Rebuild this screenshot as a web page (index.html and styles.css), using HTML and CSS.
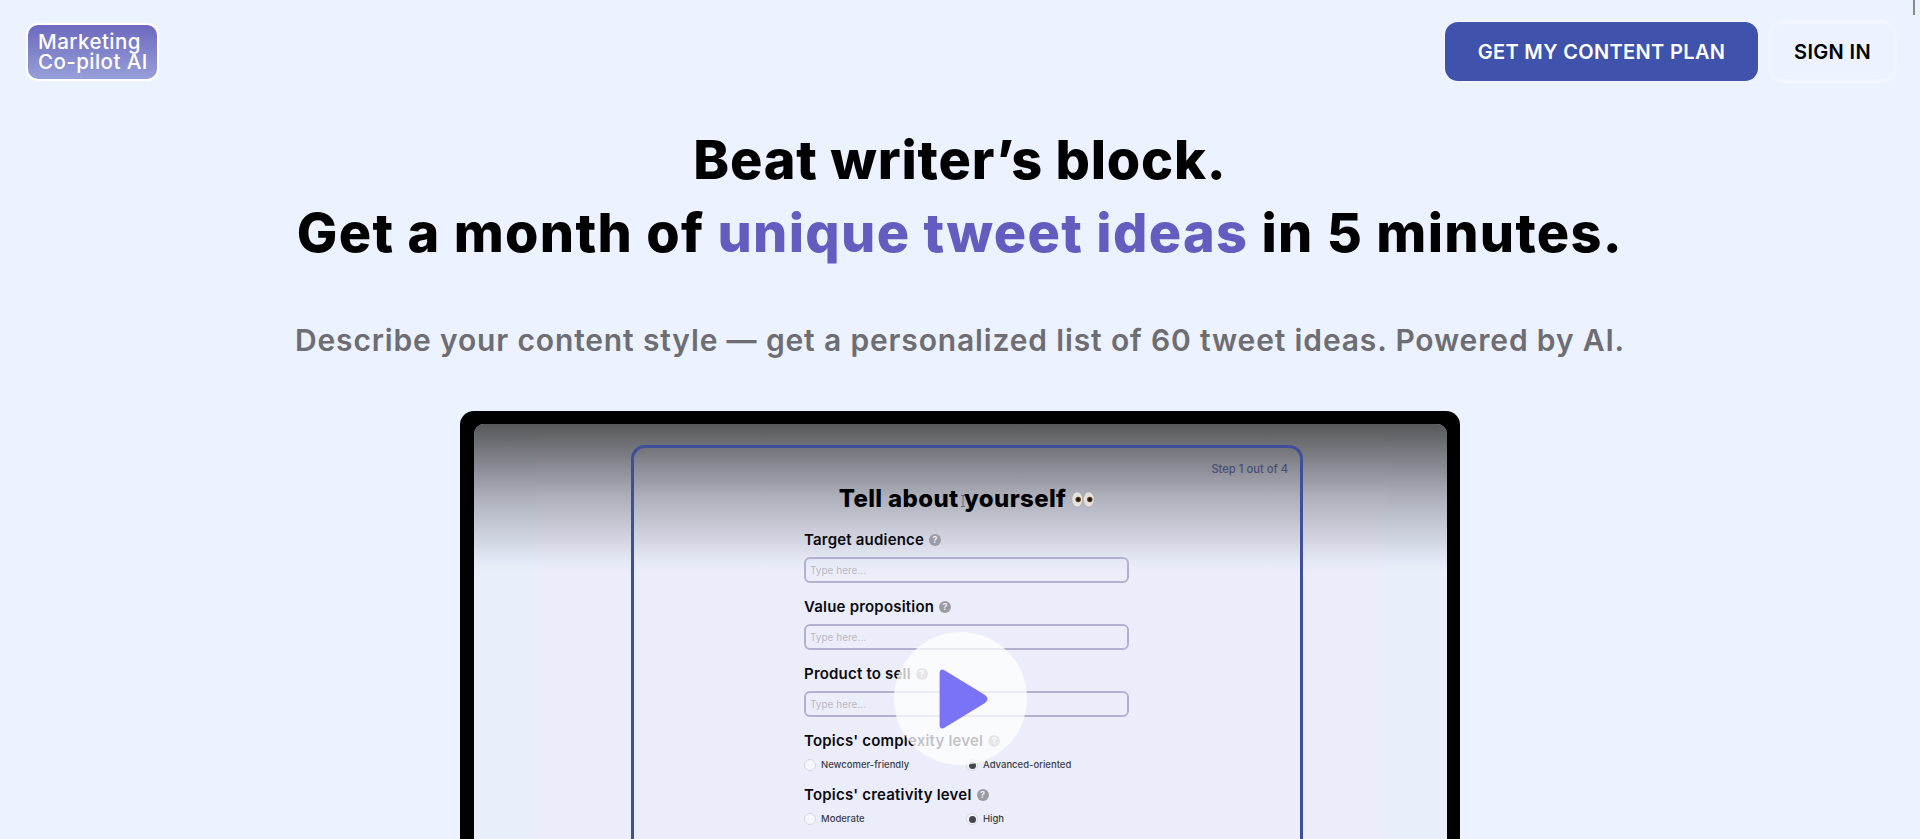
FILE: index.html
```html
<!DOCTYPE html>
<html lang="en">
<head>
<meta charset="utf-8">
<title>Marketing Co-pilot AI</title>
<link rel="stylesheet" href="styles.css">
</head>
<body>
<span class="scroll-mark"></span>
<header class="nav">
  <a class="logo">Marketing<br>Co-pilot AI</a>
  <div class="nav-actions">
    <a class="btn btn-primary">GET MY CONTENT PLAN</a>
    <a class="btn btn-ghost">SIGN IN</a>
  </div>
</header>
<main class="hero">
  <h1 class="title"><span class="title-first">Beat writer’s block.</span><br>Get a month of <span class="accent">unique tweet ideas</span> in 5 minutes.</h1>
  <p class="subtitle">Describe your content style — get a personalized list of 60 tweet ideas. Powered by AI.</p>
  <section class="video">
    <div class="screen">
      <div class="shade"></div>
      <div class="card">
        <div class="step">Step 1 out of 4</div>
        <h2 class="card-title">Tell about yourself
          <svg class="eyes" viewBox="0 0 24 16" aria-hidden="true">
            <ellipse cx="6.2" cy="8" rx="5.4" ry="7.6" fill="#e4e2dc" stroke="#a9a8a6" stroke-width=".6"/>
            <ellipse cx="17.8" cy="8" rx="5.4" ry="7.6" fill="#e4e2dc" stroke="#a9a8a6" stroke-width=".6"/>
            <circle cx="7.2" cy="8" r="2.7" fill="#5b3a12"/><circle cx="7.2" cy="8" r="1.5" fill="#111"/>
            <circle cx="18.8" cy="8" r="2.7" fill="#5b3a12"/><circle cx="18.8" cy="8" r="1.5" fill="#111"/>
          </svg>
        </h2>
        <div class="form">
          <div class="field">
            <div class="label">Target audience <span class="help">?</span></div>
            <div class="input">Type here...</div>
          </div>
          <div class="field">
            <div class="label">Value proposition <span class="help">?</span></div>
            <div class="input">Type here...</div>
          </div>
          <div class="field">
            <div class="label">Product to sell <span class="help">?</span></div>
            <div class="input">Type here...</div>
          </div>
          <div class="field field-radio">
            <div class="label">Topics' complexity level <span class="help">?</span></div>
            <div class="radios">
              <div class="radio"><span class="dot"></span>Newcomer-friendly</div>
              <div class="radio"><span class="dot dot-on"></span>Advanced-oriented</div>
            </div>
          </div>
          <div class="field field-radio">
            <div class="label">Topics' creativity level <span class="help">?</span></div>
            <div class="radios">
              <div class="radio"><span class="dot"></span>Moderate</div>
              <div class="radio"><span class="dot dot-on"></span>High</div>
            </div>
          </div>
        </div>
      </div>
      <svg class="cursor" viewBox="0 0 6 12" aria-hidden="true">
        <path d="M1 .5h4M3 .5v11M1 11.5h4" fill="none" stroke="#56565c" stroke-width=".8"/>
      </svg>
      <div class="play">
        <svg class="play-icon" viewBox="0 0 49 60" aria-hidden="true">
          <path d="M5 1 Q1 -1 .6 4 L.6 56 Q1 61 5 59 L46 34 Q51 30 46 26 Z" fill="#7b73f6"/>
        </svg>
      </div>
    </div>
  </section>
</main>
</body>
</html>
```
FILE: styles.css
```css
* { box-sizing: border-box; }
html, body { margin: 0; height: 839px; overflow: hidden; }
body {
  background: #ecf2ff;
  font-family: Inter, "Open Sans", sans-serif;
  color: #000;
  position: relative;
}
.scroll-mark {
  position: absolute; top: 0; right: 5px;
  width: 2px; height: 15px; background: #8a8a8f;
}
.nav {
  display: flex; justify-content: space-between; align-items: center;
  padding: 22px 25px 0 26px;
}
.logo {
  display: block; width: 133px; height: 58px;
  padding: 7px 0 0 10px;
  border: 2px solid #fff; border-radius: 12px;
  background: linear-gradient(#6d69bf, #979fd8);
  color: #fff; font-size: 20.5px; font-weight: 500; line-height: 20px;
  letter-spacing: .45px;
}
.nav-actions { display: flex; gap: 12px; }
.btn {
  display: flex; align-items: center; justify-content: center;
  height: 59px; border-radius: 13px;
  font-size: 20px; font-weight: 600; letter-spacing: .35px;
}
.btn-primary { width: 313px; background: #3f52ac; color: #fff; box-shadow: 0 0 3px #fff; }
.btn-ghost { width: 125px; box-shadow: 0 0 4px #fff; border: 2px solid #f1f5ff; }
.hero { display: flex; flex-direction: column; align-items: center; }
.title {
  margin: 42px 0 0; text-align: center;
  font-size: 54px; line-height: 73px; font-weight: 800; letter-spacing: 1.3px;
}
.title-first { letter-spacing: .8px; }
.accent { color: #655cbf; }
.subtitle {
  margin: 51px 0 0; color: #6d6d72;
  font-size: 30px; line-height: 40px; font-weight: 600; letter-spacing: .85px;
}
.video {
  width: 1000px; height: 600px; margin-top: 51px; flex: none;
  background: #000; border-radius: 14px;
  padding: 13px 13px 0 14px;
}
.screen {
  position: relative; height: 100%; overflow: hidden;
  border-radius: 10px 10px 0 0;
  background: linear-gradient(90deg, #e8eefa 0, #e8eefa 60px, #ebeefa 64px, #ebeefa 910px, #e8eefa 914px);
  padding: 21px 0 0 157px;
}
.card {
  width: 672px; height: 600px; position: relative;
  border: 3px solid #414e9a; border-radius: 14px;
  text-align: center;
  padding-top: 34px;
}
.step {
  position: absolute; top: 13px; right: 12px;
  font-size: 11.2px; line-height: 16px; font-weight: 500; color: #4b4e78;
}
.card-title {
  margin: 0; font-size: 24px; line-height: 34px; font-weight: 800; letter-spacing: .35px;
  display: flex; justify-content: center; align-items: center; gap: 5px;
}
.eyes { width: 24px; height: 17px; }
.form { width: 325px; margin: 14px 0 0 170px; text-align: left; }
.field { height: 67px; }
.field-radio { height: 54px; }
.label {
  font-size: 15px; line-height: 20px; font-weight: 600; color: #0a0a10; letter-spacing: .2px;
  display: flex; align-items: center; gap: 5px;
}
.help {
  width: 12px; height: 12px; border-radius: 50%;
  background: #9b9ca3; color: #ebeefa;
  font-size: 9px; line-height: 12px; font-weight: 700; text-align: center;
}
.input {
  margin-top: 7px; height: 26px; padding: 0 4px;
  border: 2px solid #b4b1d0; border-radius: 6px;
  font-size: 10px; line-height: 22px; color: #b7b8c6;
}
.radios { display: flex; margin-top: 8px; }
.radio {
  width: 162px; display: flex; align-items: center; gap: 5px;
  font-size: 9.5px; line-height: 12px; font-weight: 500; color: #3d3e4a;
}
.dot {
  width: 12px; height: 12px; border-radius: 50%;
  background: #f6f7fd; border: 1px solid #d6d7e4;
  display: flex; align-items: center; justify-content: center;
}
.dot-on::after {
  content: ""; width: 7px; height: 7px; border-radius: 50%; background: #44454f;
}
.shade {
  position: absolute; left: 0; right: 0; top: 0; height: 147px;
  background: linear-gradient(rgba(62,62,64,.85), rgba(90,90,100,.42) 50%, rgba(160,165,185,.1) 92%, rgba(200,205,225,0));
}
.cursor { position: absolute; left: 486px; top: 71px; width: 6px; height: 12px; }
.play {
  position: absolute; left: 420px; top: 208px;
  width: 133px; height: 133px; border-radius: 50%;
  background: rgba(255,255,255,.75);
  display: flex; align-items: center; justify-content: center;
}
.play-icon { width: 49px; height: 60px; margin-left: 6px; }
```
